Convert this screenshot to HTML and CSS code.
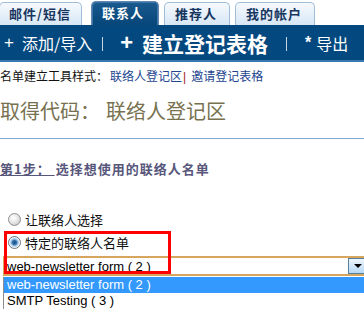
FILE: index.html
```html
<!DOCTYPE html>
<html lang="zh-CN">
<head>
<meta charset="utf-8">
<title>联系人</title>
<link rel="stylesheet" href="styles.css">
</head>
<body>
<div class="page">
  <div class="tabs">
    <div class="tab first">邮件/短信</div>
    <div class="tab active">联系人</div>
    <div class="tab">推荐人</div>
    <div class="tab">我的帐户</div>
  </div>
  <div class="bar">
    <span class="b-plus">+</span>
    <span class="b-add">添加/导入</span>
    <span class="b-sep s1"></span>
    <span class="b-bigplus">+</span>
    <span class="b-big">建立登记表格</span>
    <span class="b-sep s2"></span>
    <span class="b-star">*</span>
    <span class="b-exp">导出</span>
  </div>
  <div class="toolline">
    <span class="label">名单建立工具样式：</span><a class="link l1">联络人登记区</a><span class="pipe">|</span><a class="link l2">邀请登记表格</a>
  </div>
  <h1 class="heading"><span>取得代码：</span><span class="h-name">联络人登记区</span></h1>
  <div class="rule"></div>
  <div class="step"><span class="step-no">第1步：&nbsp;</span><span class="step-text">选择想使用的联络人名单</span></div>
  <div class="choices">
    <div class="radio-row r1"><span class="radio"></span><span class="rlabel">让联络人选择</span></div>
    <div class="radio-row r2"><span class="radio checked"></span><span class="rlabel">特定的联络人名单</span></div>
    <div class="select">
      <span class="sel-text">web-newsletter form ( 2 )</span>
      <span class="sel-btn"><span class="tri"></span></span>
    </div>
    <div class="list">
      <div class="opt hl">web-newsletter form ( 2 )</div>
      <div class="opt">SMTP Testing ( 3 )</div>
    </div>
    <div class="highlight"></div>
  </div>
</div>
</body>
</html>
```
FILE: styles.css
```css
html, body {
  margin: 0;
  padding: 0;
  background: #ffffff;
}
body {
  font-family: "Noto Sans CJK SC", "Liberation Sans", sans-serif;
  width: 364px;
  height: 310px;
  overflow: hidden;
}
.page {
  position: relative;
  width: 364px;
}
.tabs {
  display: flex;
  align-items: flex-end;
  height: 25px;
}
.tab {
  box-sizing: border-box;
  height: 23px;
  padding: 0 12px 0 10px;
  margin-left: 5px;
  border: 1px solid #9fbcd8;
  border-bottom: none;
  border-radius: 5px 5px 0 0;
  background: linear-gradient(#f6f9fd, #d7e7f6);
  color: #16365f;
  font-size: 13px;
  font-weight: bold;
  letter-spacing: 1px;
  line-height: 22px;
  white-space: nowrap;
}
.tab.first {
  margin-left: -1px;
  padding-left: 9px;
  padding-right: 10px;
  margin-right: 4px;
}
.tab.active {
  height: 24px;
  background: linear-gradient(#1a5a8f, #064679);
  border-color: #5d86b0;
  box-shadow: inset 1px 1px 0 #3f74a6, inset -1px 0 0 #3f74a6;
  color: #ffffff;
  padding-right: 14px;
}
.bar {
  display: flex;
  align-items: center;
  height: 35px;
  background: #03487f;
  border-bottom: 2px solid #3a78b0;
  color: #ffffff;
  white-space: nowrap;
}
.b-plus {
  font-family: "Liberation Sans", sans-serif;
  font-size: 17px;
  margin-left: 4px;
}
.b-add {
  font-size: 16px;
  margin-left: 8px;
}
.b-sep {
  display: inline-block;
  width: 1px;
  height: 14px;
  margin-top: 2px;
  background: #c9d6e2;
}
.b-sep.s1 { margin-left: 10px; }
.b-bigplus {
  font-family: "Liberation Sans", sans-serif;
  font-size: 22px;
  font-weight: bold;
  margin-left: 17px;
}
.b-big {
  font-size: 21px;
  font-weight: bold;
  margin-left: 9px;
  letter-spacing: 0;
}
.b-sep.s2 { margin-left: 18px; }
.b-star {
  font-family: "Liberation Sans", sans-serif;
  font-size: 16px;
  font-weight: bold;
  margin-left: 18px;
}
.b-exp {
  font-size: 16px;
  margin-left: 5px;
}
.toolline {
  margin: 6px 0 0 0;
  height: 16px;
  line-height: 16px;
  font-size: 12px;
  color: #111111;
  white-space: nowrap;
}
.link {
  color: #23448f;
}
.l1 { margin-left: 2px; }
.pipe {
  color: #a3242a;
  font-family: "Liberation Sans", sans-serif;
  margin: 0 5px 0 1px;
}
.heading {
  margin: 15px 0 0 0;
  height: 24px;
  line-height: 24px;
  font-size: 20px;
  font-weight: normal;
  color: #77714f;
  white-space: nowrap;
}
.h-name { margin-left: 6px; }
.rule {
  margin-top: 15px;
  height: 1px;
  background: #86a9d2;
}
.step {
  margin-top: 22px;
  height: 16px;
  line-height: 16px;
  font-size: 13px;
  font-weight: bold;
  letter-spacing: 1px;
  color: #57567b;
  white-space: nowrap;
}
.step-no {
  text-decoration: underline;
}
.step-text { margin-left: 1px; }
.choices {
  position: relative;
  margin-top: 32px;
}
.radio-row {
  display: flex;
  align-items: center;
  height: 20px;
  font-size: 13px;
  color: #111111;
}
.r2 { margin-top: 3px; }
.radio {
  box-sizing: border-box;
  width: 13px;
  height: 13px;
  margin-left: 8px;
  border-radius: 50%;
  border: 1px solid #8e8f8f;
  background: radial-gradient(circle at 40% 35%, #ffffff 0%, #e8e8e8 45%, #bdbdbd 100%);
}
.radio.checked {
  border-color: #6d7580;
  background: radial-gradient(circle at 50% 50%, #1c4f86 0, #2f6aa6 2px, #9cc4ea 3.5px, #eef3f8 5px);
}
.rlabel { margin-left: 4px; }
.select {
  display: flex;
  align-items: center;
  box-sizing: border-box;
  height: 20px;
  margin: 4px 0 0 3px;
  border-top: 2px solid #d6a65f;
  border-bottom: 2px solid #d6a65f;
  border-left: 1px solid #d6a65f;
  background: #ffffff;
}
.sel-text {
  flex: 1;
  font-family: "Liberation Sans", sans-serif;
  font-size: 13px;
  color: #000000;
  padding-left: 3px;
}
.sel-btn {
  box-sizing: border-box;
  width: 16px;
  height: 16px;
  margin-top: -1px;
  border: 1px solid #55809f;
  border-right: none;
  background: linear-gradient(#eef6fd, #b7d9f4);
  display: flex;
  align-items: center;
  justify-content: center;
}
.tri {
  width: 0;
  height: 0;
  border-left: 4px solid transparent;
  border-right: 4px solid transparent;
  border-top: 4px solid #000000;
  margin-left: 2px;
}
.list {
  margin: 1px 0 0 3px;
  border-left: 1px solid #8c8c8c;
  background: #ffffff;
}
.opt {
  height: 16px;
  line-height: 16px;
  padding-left: 3px;
  font-family: "Liberation Sans", sans-serif;
  font-size: 13px;
  color: #000000;
}
.opt.hl {
  background: #3399ff;
  color: #ffffff;
}
.highlight {
  position: absolute;
  left: 4px;
  top: 22px;
  width: 167px;
  height: 43px;
  box-sizing: border-box;
  border: 3px solid #ff0000;
  pointer-events: none;
}
```
